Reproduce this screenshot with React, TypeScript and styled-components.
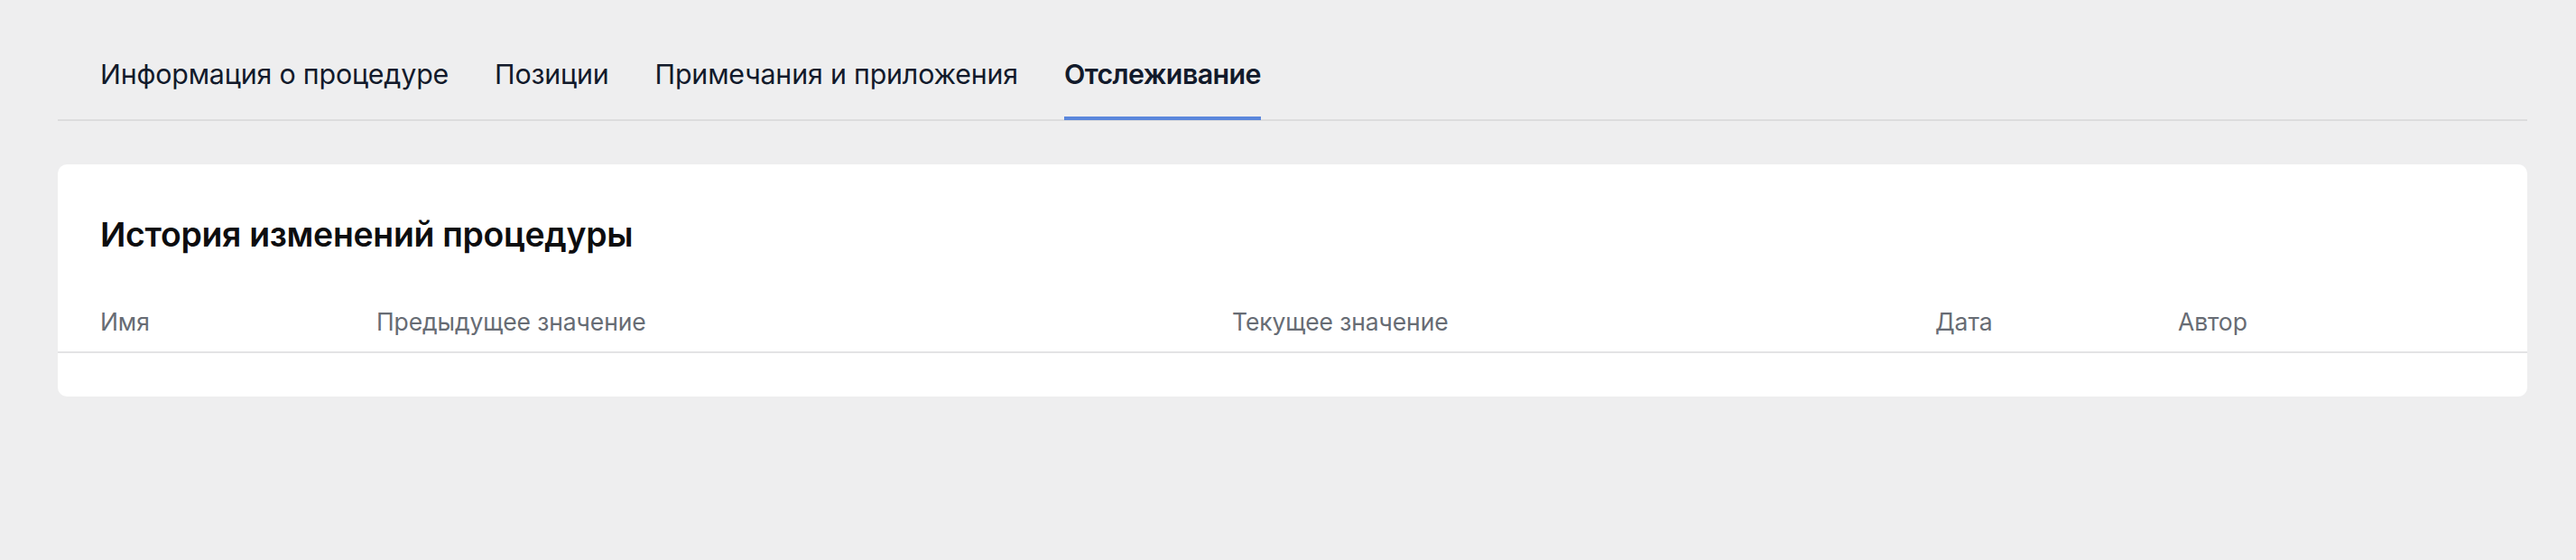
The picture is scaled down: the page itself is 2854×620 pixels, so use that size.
import React from "react";
import styled, { createGlobalStyle } from "styled-components";

const Global = createGlobalStyle`
  html, body { margin: 0; padding: 0; background: #eeeeef; }
  body { font-family: Inter, "Noto Sans", sans-serif; -webkit-font-smoothing: antialiased; }
`;

const Page = styled.div`
  width: 2854px;
  height: 620px;
  box-sizing: border-box;
  padding: 0 54px 0 64px;
  background: #eeeeef;
`;

const TabBar = styled.nav`
  display: flex;
  gap: 51px;
  padding: 62px 0 0 47px;
  border-bottom: 2px solid #dcdcdd;
`;

const Tab = styled.div<{ $active?: boolean }>`
  position: relative;
  font-size: 30.4px;
  line-height: 40px;
  padding-bottom: 30px;
  color: #121a2b;
  font-weight: ${(p) => (p.$active ? 600 : 400)};
  letter-spacing: ${(p) => (p.$active ? "-0.6px" : "-0.2px")};
  &::after {
    content: "";
    display: ${(p) => (p.$active ? "block" : "none")};
    position: absolute;
    left: 0;
    right: 0;
    bottom: -1px;
    height: 4px;
    background: #5b87dc;
  }
`;

const Card = styled.section`
  margin-top: 48px;
  background: #ffffff;
  border-radius: 10px;
  padding: 56px 0 48px;
`;

const Title = styled.h2`
  margin: 0;
  padding: 0 47px;
  font-size: 37.4px;
  line-height: 44px;
  font-weight: 600;
  color: #0d0d0f;
  letter-spacing: -0.3px;
`;

const HeadRow = styled.div`
  display: grid;
  grid-template-columns: 306px 948px 779px 269px 1fr;
  padding: 0 47px;
  margin-top: 57px;
  height: 50px;
  align-items: start;
  border-bottom: 2px solid #e3e3e5;
`;

const HeadCell = styled.div`
  font-size: 26.5px;
  line-height: 34px;
  color: #676c74;
  letter-spacing: -0.1px;
`;

const tabs = [
  "Информация о процедуре",
  "Позиции",
  "Примечания и приложения",
  "Отслеживание",
];

const columns = ["Имя", "Предыдущее значение", "Текущее значение", "Дата", "Автор"];

export default function App() {
  return (
    <Page>
      <Global />
      <TabBar>
        {tabs.map((t, i) => (
          <Tab key={t} $active={i === 3}>
            {t}
          </Tab>
        ))}
      </TabBar>
      <Card>
        <Title>История изменений процедуры</Title>
        <HeadRow>
          {columns.map((c) => (
            <HeadCell key={c}>{c}</HeadCell>
          ))}
        </HeadRow>
      </Card>
    </Page>
  );
}
